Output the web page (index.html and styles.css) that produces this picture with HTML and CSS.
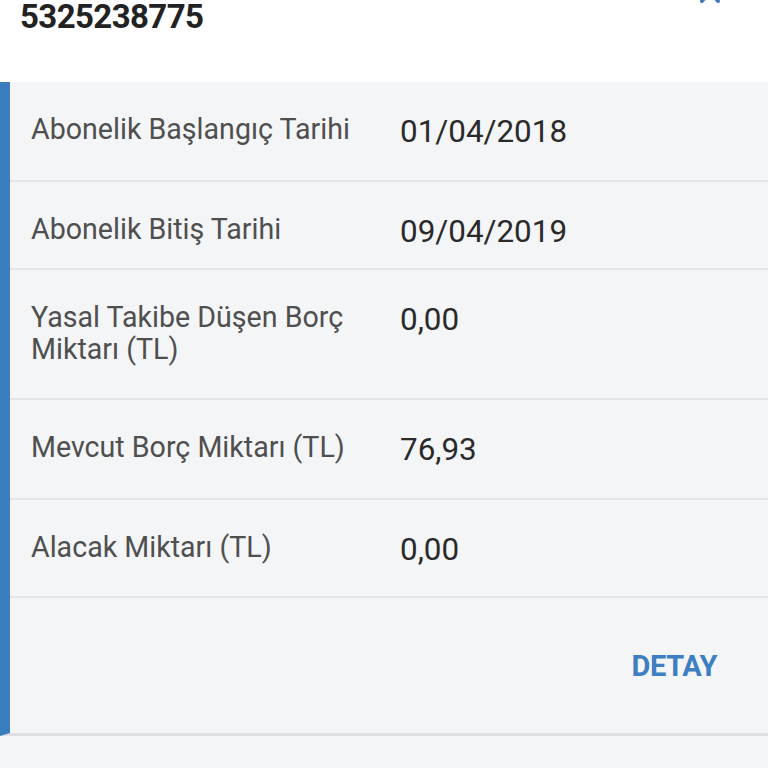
FILE: index.html
```html
<!DOCTYPE html>
<html lang="tr">
<head>
<meta charset="utf-8">
<title>Abonelik</title>
<link rel="stylesheet" href="styles.css">
</head>
<body>
<header class="top">
  <div class="number">5325238775</div>
  <button class="close" aria-label="Kapat">
    <svg viewBox="0 0 24 24" width="28" height="28"><path d="M5 5L19 19M19 5L5 19" stroke="#3f78b4" stroke-width="3" stroke-linecap="round" fill="none"/></svg>
  </button>
</header>
<section class="card">
  <div class="row r1"><div class="label">Abonelik Başlangıç Tarihi</div><div class="value">01/04/2018</div></div>
  <div class="row r2"><div class="label">Abonelik Bitiş Tarihi</div><div class="value">09/04/2019</div></div>
  <div class="row r3"><div class="label">Yasal Takibe Düşen Borç Miktarı (TL)</div><div class="value">0,00</div></div>
  <div class="row r4"><div class="label">Mevcut Borç Miktarı (TL)</div><div class="value">76,93</div></div>
  <div class="row r5"><div class="label">Alacak Miktarı (TL)</div><div class="value">0,00</div></div>
  <div class="foot"><span class="detay">DETAY</span></div>
</section>
</body>
</html>
```
FILE: styles.css
```css
html, body {
  margin: 0;
  padding: 0;
  background: #f4f5f7;
  font-family: Roboto, "Noto Sans", sans-serif;
}
.top {
  background: #ffffff;
  height: 82px;
  display: flex;
  justify-content: space-between;
  align-items: flex-start;
  padding: 0 0 0 20px;
  box-sizing: border-box;
  overflow: hidden;
}
.number {
  font-size: 33px;
  line-height: 33px;
  font-weight: 700;
  color: #222222;
  letter-spacing: -0.6px;
}
.close {
  border: 0;
  background: none;
  padding: 0;
  margin: -21px 44px 0 0;
  width: 28px;
  height: 28px;
}
.card {
  border-left: 10px solid #3b7ebf;
  background: #f4f5f7;
  border-bottom: 3px solid #dfe0e3;
}
.row {
  display: grid;
  grid-template-columns: 369px 1fr;
  padding: 31px 0 0 21px;
  box-sizing: border-box;
  border-bottom: 2px solid #e3e4e7;
}
.r1 { height: 100px; }
.r2 { height: 88px; }
.r3 { height: 130px; }
.r4 { height: 100px; }
.r5 { height: 98px; }
.label {
  font-size: 28.6px;
  line-height: 32px;
  color: #4f4f4f;
  padding-right: 20px;
}
.value {
  font-size: 31.4px;
  line-height: 32px;
  color: #2a2a2a;
  padding-top: 3px;
}
.foot {
  height: 135px;
  display: flex;
  justify-content: flex-end;
  align-items: center;
  padding-right: 51px;
  box-sizing: border-box;
}
.detay {
  font-size: 29px;
  font-weight: 700;
  color: #3d7fc1;
  letter-spacing: -0.4px;
}
```
